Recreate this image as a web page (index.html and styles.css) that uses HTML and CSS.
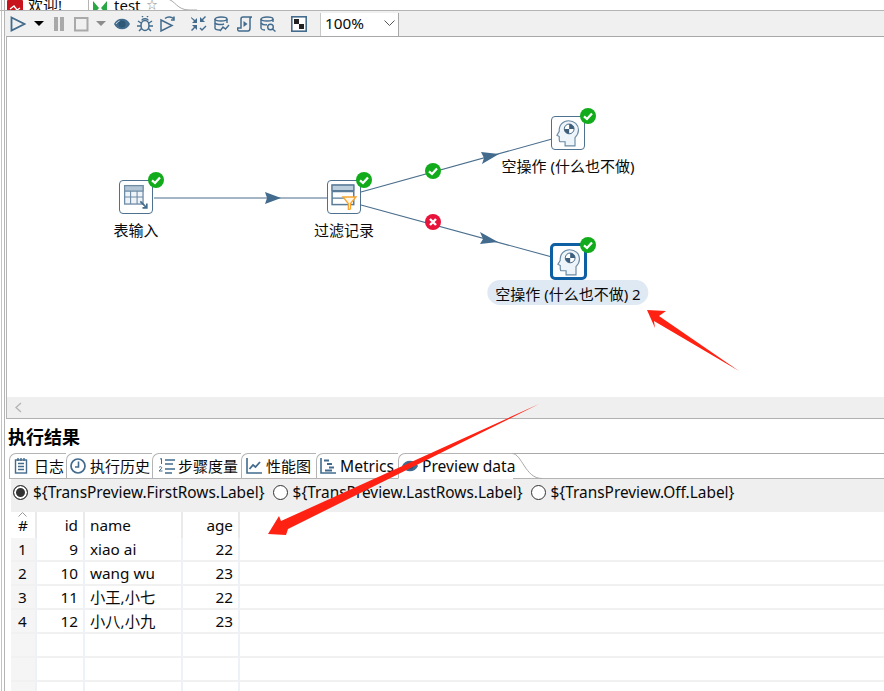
FILE: index.html
```html
<!DOCTYPE html>
<html lang="zh">
<head>
<meta charset="utf-8">
<title>test</title>
<link rel="stylesheet" href="styles.css">
</head>
<body>
<div class="page">
  <header class="filetabs">
    <div class="filetab filetab-welcome">
      <svg class="ft-icon" viewBox="0 0 16 16"><rect width="16" height="16" rx="1" fill="#c8141c"/><path d="M3 9l4-3 3 4 3-2" stroke="#fff" stroke-width="1.4" fill="none"/></svg>
      <span>欢迎!</span>
    </div>
    <div class="filetab filetab-test">
      <svg class="ft-icon" viewBox="0 0 16 16"><path d="M1 1l6 7-6 7zM15 1L9 8l6 7z" fill="#27a844"/></svg>
      <span>test</span>
      <span class="ft-star">☆</span>
      <svg class="ft-curve" viewBox="0 0 30 12"><path d="M0 0C8 1 10 11 22 11H30" fill="none" stroke="#a8a8a8"/></svg>
    </div>
  </header>

  <nav class="toolbar">
    <svg class="ti ti-run" viewBox="0 0 16 16"><path d="M1.500 1.500L14.500 8 1.500 14.500z" fill="none" stroke="#426b8d" stroke-width="1.800"/></svg>
    <svg class="ti-drop" viewBox="0 0 10 5"><path d="M0 0h10L5 5z" fill="#000"/></svg>
    <svg class="ti ti-pause" viewBox="0 0 16 16"><path d="M3 1h4v14H3zM9 1h4v14H9z" fill="#a9a9a9"/></svg>
    <svg class="ti ti-stop" viewBox="0 0 16 16"><rect x="2" y="2" width="12.500" height="12.500" fill="none" stroke="#a9a9a9" stroke-width="2"/></svg>
    <svg class="ti-drop ti-drop-grey" viewBox="0 0 10 5"><path d="M0 0h10L5 5z" fill="#8c8c8c"/></svg>
    <svg class="ti ti-eye" viewBox="0 0 16 16"><path d="M0 8c3-7 13-7 16 0-3 7-13 7-16 0z" fill="#426b8d"/><circle cx="8" cy="8" r="3.500" fill="#2e5878"/><path d="M2 8c1-1.500 2-2.500 3.500-3" stroke="#cfdbe5" fill="none"/></svg>
    <svg class="ti ti-bug" viewBox="0 0 16 16"><g fill="none" stroke="#426b8d" stroke-width="1.500"><ellipse cx="8" cy="9.500" rx="4" ry="5"/><path d="M5 4.500C5 2 11 2 11 4.500M4 7L1 5M12 7l3-2M4 10H0M12 10h4M4.500 12.500L2 15M11.500 12.500L14 15M6 1L5 0M10 1l1-1"/></g></svg>
    <svg class="ti ti-debug" viewBox="0 0 16 16"><g fill="none" stroke="#426b8d" stroke-width="1.500"><path d="M1 4l11 5.500L1 15z"/><path d="M5 2.500C8 0 12 1 14 3M14 .5V4h-3"/></g></svg>
    <svg class="ti ti-shrink" viewBox="0 0 16 16"><g fill="#426b8d"><path d="M0 1l4 3 2-2v5H1l2-2-3-3zM14 0l-3 3-2-2v5h5l-2-2 3-3zM0 14l3-3-2-2h5v5l-2-2-3 3z"/></g><path d="M9 12l2 2 4-4" fill="none" stroke="#426b8d" stroke-width="1.400"/></svg>
    <svg class="ti ti-dbchart" viewBox="0 0 16 16"><g fill="none" stroke="#426b8d" stroke-width="1.400"><path d="M1 3v9c0 1 2 2 5 2M13 3v4"/><ellipse cx="7" cy="3" rx="6" ry="2"/><path d="M1 7c1 1.500 6 2 9 1M6 15l3-4 2.500 2L15 9"/></g></svg>
    <svg class="ti ti-script" viewBox="0 0 16 16"><g fill="none" stroke="#426b8d" stroke-width="1.500"><path d="M4 12V3c0-1.500 1-2 2-2h9c-1 0-2 1-2 2v9c0 2-1 3-2 3H2c-1 0-1.500-1-1.500-3z"/></g><path d="M6.500 5l4 3-4 3z" fill="#426b8d"/></svg>
    <svg class="ti ti-dbsearch" viewBox="0 0 16 16"><g fill="none" stroke="#426b8d" stroke-width="1.400"><path d="M1 3v9c0 1 2 2 4 2M13 3v3"/><ellipse cx="7" cy="3" rx="6" ry="2"/><path d="M1 7c1 1.500 4 2 6 1.800"/><circle cx="10.500" cy="11" r="2.800"/><path d="M12.500 13l3 2.500"/></g></svg>
    <svg class="ti ti-grid" viewBox="0 0 16 16"><rect x=".8" y=".8" width="14.400" height="14.400" fill="#fff" stroke="#426b8d" stroke-width="1.600"/><rect x="3" y="3" width="5" height="5" fill="#222"/><rect x="8" y="8" width="5" height="5" fill="#222"/></svg>
    <div class="zoom-combo">
      <span>100%</span>
      <svg class="combo-chev" viewBox="0 0 11 6"><path d="M.5.500L5.500 5.500 10.500.500" fill="none" stroke="#555"/></svg>
    </div>
    <div class="toolbar-sep"></div>
  </nav>

  <main class="canvas-frame">
    <section class="canvas">
      <svg class="hops" viewBox="0 0 878 361">
        <g stroke="#4a6e8d" stroke-width="1.100" fill="none">
          <path d="M147 161H321"/>
          <path d="M354 155L545 102"/>
          <path d="M354 168L545 220"/>
        </g>
        <g fill="#426b8d">
          <path d="M274 161L258 155l2 6-2 6z"/>
          <path d="M492 117L474 115l3 6-2 6z"/>
          <path d="M491 205L473 195l3 7-3 5z"/>
        </g>
      </svg>

      <div class="node node-input">
        <svg class="node-icon" viewBox="0 0 24 24"><rect x="1.500" y="1.500" width="17" height="17" fill="#eef3f7" stroke="#6d8ba5" stroke-width="1.200"/><path d="M1.500 6.500h17M1.500 12h17M7 6.500v12M13 6.500v12" stroke="#6d8ba5"/><path d="M1.500 1.500h17v5h-17z" fill="#b4c6d5" stroke="#6d8ba5"/><path d="M16 16l6 6M22 18v4h-4" fill="none" stroke="#426b8d" stroke-width="1.500"/></svg>
        <svg class="badge" viewBox="0 0 16 16"><use href="#ok"/></svg>
      </div>
      <div class="node node-filter">
        <svg class="node-icon" viewBox="0 0 24 24"><rect x="1" y="1" width="20" height="18" fill="#fff" stroke="#5a7b98" stroke-width="1.400"/><path d="M1 1h20v5H1z" fill="#bccddb" stroke="#5a7b98"/><path d="M1 7h20M1 13h20" stroke="#5a7b98"/><path d="M11 12h12l-5 6v5l-2 1v-6z" fill="#fff6e5" stroke="#f6a531" stroke-width="1.200"/></svg>
        <svg class="badge" viewBox="0 0 16 16"><use href="#ok"/></svg>
      </div>
      <div class="node node-dummy">
        <svg class="node-icon node-icon-head" viewBox="0 0 24 24"><use href="#head"/></svg>
        <svg class="badge" viewBox="0 0 16 16"><use href="#ok"/></svg>
      </div>
      <div class="node node-dummy2">
        <svg class="node-icon node-icon-head" viewBox="0 0 24 24"><use href="#head"/></svg>
        <svg class="badge" viewBox="0 0 16 16"><use href="#ok"/></svg>
      </div>

      <span class="node-label label-input">表输入</span>
      <span class="node-label label-filter">过滤记录</span>
      <span class="node-label label-dummy">空操作 (什么也不做)</span>
      <span class="node-label label-dummy2">空操作 (什么也不做) 2</span>

      <svg class="badge hop-ok" viewBox="0 0 16 16"><use href="#ok"/></svg>
      <svg class="badge hop-err" viewBox="0 0 16 16"><circle cx="8" cy="8" r="8" fill="#e8123a"/><path d="M5 5l6 6M11 5l-6 6" stroke="#fff" stroke-width="2.400"/></svg>
    </section>
    <div class="hscroll"><svg class="hscroll-chev" viewBox="0 0 7 11"><path d="M6 1L1 5.500 6 10" fill="none" stroke="#b5b5b5" stroke-width="1.400"/></svg></div>
  </main>

  <section class="results">
    <h2 class="results-title">执行结果</h2>
    <div class="rtabs">
      <div class="rtab rtab-log">
        <svg class="rt-icon" viewBox="0 0 16 16"><g fill="none" stroke="#426b8d" stroke-width="1.400"><rect x="2.500" y="2" width="11" height="13"/><path d="M5 5.500h6M5 8.500h6M5 11.500h6M5 0v3M8 0v3M11 0v3"/></g></svg>
        <span>日志</span>
      </div>
      <div class="rtab rtab-history">
        <svg class="rt-icon" viewBox="0 0 16 16"><circle cx="8" cy="8" r="7" fill="none" stroke="#426b8d" stroke-width="1.700"/><path d="M8.500 3.500V9H5" fill="none" stroke="#426b8d" stroke-width="1.600"/></svg>
        <span>执行历史</span>
      </div>
      <div class="rtab rtab-steps">
        <svg class="rt-icon" viewBox="0 0 16 16"><path d="M6 2h10M6 6h8M6 11h10M6 15h7" stroke="#426b8d" stroke-width="1.300" fill="none"/><path d="M1 1l1.500-.5V6M0 9.500c2-2 3.500 0 2 1.500L0 13h3.500" stroke="#426b8d" fill="none"/></svg>
        <span>步骤度量</span>
      </div>
      <div class="rtab rtab-perf">
        <svg class="rt-icon" viewBox="0 0 16 16"><path d="M1 0v15h15" fill="none" stroke="#426b8d" stroke-width="1.600"/><path d="M3.500 11l3.500-4 2.500 2L14 4" fill="none" stroke="#426b8d" stroke-width="1.800"/></svg>
        <span>性能图</span>
      </div>
      <div class="rtab rtab-metrics">
        <svg class="rt-icon" viewBox="0 0 16 16"><path d="M1 0v15h15" fill="none" stroke="#426b8d" stroke-width="1.600"/><path d="M4 2.500h5M7 6h5M9 9.500h5M5 12.500h7" stroke="#426b8d" stroke-width="2"/></svg>
        <span>Metrics</span>
      </div>
      <div class="rtab rtab-preview">
        <svg class="rt-icon" viewBox="0 0 16 16"><path d="M0 8c3-7 13-7 16 0-3 7-13 7-16 0z" fill="#426b8d"/><circle cx="8" cy="8" r="3.500" fill="#2e5878"/></svg>
        <span>Preview data</span>
        <svg class="rt-curve" viewBox="0 0 30 26"><path d="M0 .5C10 .5 13 25.500 30 25.500" fill="#fff" stroke="#a8a8a8"/></svg>
      </div>
      <div class="rtab-fill"></div>
    </div>

    <div class="radios">
      <label class="radio"><span class="radio-dot radio-on"></span><span>${TransPreview.FirstRows.Label}</span></label>
      <label class="radio"><span class="radio-dot"></span><span>${TransPreview.LastRows.Label}</span></label>
      <label class="radio"><span class="radio-dot"></span><span>${TransPreview.Off.Label}</span></label>
    </div>

    <table class="grid">
      <thead>
        <tr><th class="c-num"><svg class="sort-caret" viewBox="0 0 9 5"><path d="M.5 4.500L4.500.5l4 4" fill="none" stroke="#999"/></svg>#</th><th class="c-id">id</th><th class="c-name">name</th><th class="c-age">age</th><th class="c-rest"></th></tr>
      </thead>
      <tbody>
        <tr><td class="c-num">1</td><td class="c-id">9</td><td class="c-name">xiao ai</td><td class="c-age">22</td><td class="c-rest"></td></tr>
        <tr><td class="c-num">2</td><td class="c-id">10</td><td class="c-name">wang wu</td><td class="c-age">23</td><td class="c-rest"></td></tr>
        <tr><td class="c-num">3</td><td class="c-id">11</td><td class="c-name">小王,小七</td><td class="c-age">22</td><td class="c-rest"></td></tr>
        <tr><td class="c-num">4</td><td class="c-id">12</td><td class="c-name">小八,小九</td><td class="c-age">23</td><td class="c-rest"></td></tr>
        <tr><td class="c-num"></td><td class="c-id"></td><td class="c-name"></td><td class="c-age"></td><td class="c-rest"></td></tr>
        <tr><td class="c-num"></td><td class="c-id"></td><td class="c-name"></td><td class="c-age"></td><td class="c-rest"></td></tr>
        <tr><td class="c-num"></td><td class="c-id"></td><td class="c-name"></td><td class="c-age"></td><td class="c-rest"></td></tr>
      </tbody>
    </table>
  </section>

  <svg class="annotations" viewBox="0 0 884 691">
    <path d="M647 310L666 311 659 316 739 371 654 321 655 328z" fill="#ff2213"/>
    <path d="M268 534L279 516 281 521 539 404 288 529 286 535z" fill="#ff2213"/>
  </svg>

  <svg class="defs" width="0" height="0">
    <defs>
      <g id="ok"><circle cx="8" cy="8" r="8" fill="#12ab1c"/><path d="M4 8.300L7 11l5-5.500" fill="none" stroke="#fff" stroke-width="2.300"/></g>
      <g id="head">
        <path d="M9.500 23v-3.500H5.500c-1 0-1-1-1-2V15L2.500 14l2-3.500C4 5 8 1.500 12.500 1.500c5 0 8.500 3.500 8.500 8 0 3-1 4.500-3 6.500v7z" fill="#eef5fa" stroke="#6b8aa4" stroke-width="1"/>
        <circle cx="13" cy="8.500" r="4.200" fill="#fff" stroke="#3d5f7c" stroke-width=".8"/>
        <path d="M13 8.500V4.300a4.200 4.200 0 0 1 4.200 4.200zM13 8.500H8.800A4.200 4.200 0 0 0 13 12.700z" fill="#3d5f7c"/>
      </g>
    </defs>
  </svg>
</div>
</body>
</html>
```
FILE: styles.css
```css
* { box-sizing: border-box; }
html, body { margin: 0; padding: 0; background: #fff; }
body {
  font-family: "Noto Sans", "Noto Sans CJK SC", sans-serif;
  font-size: 15.3px;
  color: #0a0a0a;
}
.page {
  position: relative;
  width: 884px;
  height: 691px;
  overflow: hidden;
  display: flex;
  flex-direction: column;
  background:
    linear-gradient(#c4c4c4, #c4c4c4) 1px 0 / 1px 100% no-repeat,
    linear-gradient(#b4b4b4, #b4b4b4) 4px 0 / 1px 100% no-repeat,
    #fff;
}

/* top file tabs (cut by the screenshot) */
.filetabs {
  height: 11px;
  flex: none;
  display: flex;
  overflow: hidden;
  border-bottom: 1px solid #b4b4b4;
}
.filetab {
  position: relative;
  height: 10px;
  display: flex;
  align-items: flex-end;
  line-height: 18px;
  font-size: 15px;
}
.filetab span { position: relative; top: 4px; }
.filetab-welcome { width: 89px; padding-left: 7px; gap: 5px; border-right: 1px solid #b4b4b4; }
.filetab-test { width: 84px; padding-left: 3px; gap: 6px; background: #fff; }
.ft-icon { width: 16px; height: 16px; flex: none; margin-bottom: -6px; }
.ft-star { font-size: 11px; color: #888; }
.ft-curve { position: absolute; left: 78px; top: -1px; width: 30px; height: 12px; }

/* toolbar */
.toolbar {
  height: 25px;
  flex: none;
  display: flex;
  align-items: center;
  background: #f0f0f0;
  margin-left: 5px;
  padding-left: 5px;
}
.ti { width: 16px; height: 16px; flex: none; }
.ti-drop { width: 10px; height: 5px; flex: none; margin-left: 8px; }
.ti-pause { margin-left: 7px; }
.ti-stop { margin-left: 6px; }
.ti-drop-grey { margin-left: 7px; }
.ti-eye { margin-left: 8px; }
.ti-bug { margin-left: 7px; }
.ti-debug { margin-left: 7px; }
.ti-shrink { margin-left: 15px; }
.ti-dbchart { margin-left: 7px; }
.ti-script { margin-left: 7px; }
.ti-dbsearch { margin-left: 7px; }
.ti-grid { margin-left: 15px; }
.zoom-combo {
  margin-left: 13px;
  width: 79px;
  height: 23px;
  background: #fff;
  border-left: 1px solid #c8c8c8;
  border-right: 1px solid #a8a8a8;
  display: flex;
  align-items: center;
  justify-content: space-between;
  padding: 0 3px 3px 4px;
  align-self: flex-end;
  font-size: 15.3px;
  line-height: 20px;
}
.combo-chev { width: 11px; height: 6px; }
.toolbar-sep { flex: 1; }

/* canvas */
.canvas-frame {
  height: 383px;
  flex: none;
  margin-left: 6px;
  display: flex;
  flex-direction: column;
  border-bottom: 1px solid #b0b0b0;
  position: relative;
}
.canvas {
  position: relative;
  height: 361px;
  flex: none;
  border-left: 1px solid #b4b4b4;
  border-top: 1px solid #a8a8a8;
  background: #fff;
}
.hops { position: absolute; left: 0; top: 0; width: 878px; height: 361px; }
.hscroll {
  flex: 1;
  background: #efefef;
  border-left: 1px solid #b4b4b4;
  display: flex;
  align-items: center;
  padding-left: 8px;
}
.hscroll-chev { width: 7px; height: 11px; }

.node {
  position: absolute;
  width: 34px;
  height: 34px;
  border: 1px solid #4f7190;
  border-radius: 4px;
  background: #fff;
  display: flex;
  align-items: center;
  justify-content: center;
}
.node-icon { width: 26px; height: 26px; }
.node-icon-head { width: 28px; height: 28px; }
.node-input { left: 112px; top: 143px; }
.node-filter { left: 320px; top: 143px; }
.node-dummy { left: 544px; top: 79px; }
.node-dummy2 {
  left: 543px;
  top: 206px;
  width: 37px;
  height: 37px;
  border: 3px solid #0f5fa3;
  border-radius: 5px;
}
.badge { position: absolute; width: 16px; height: 16px; }
.node .badge { right: -12px; top: -9px; }
.hop-ok { left: 418px; top: 126px; }
.hop-err { left: 418px; top: 177px; }

.node-label {
  position: absolute;
  white-space: nowrap;
  transform: translateX(-50%);
  font-size: 15px;
  line-height: 20px;
}
.label-input { left: 129px; top: 183px; }
.label-filter { left: 337px; top: 183px; }
.label-dummy { left: 561px; top: 119px; }
.label-dummy2 {
  left: 561px;
  top: 243px;
  height: 25px;
  line-height: 28px;
  padding: 0 8px;
  border-radius: 13px;
  background: #dfe9f3;
}

/* results */
.results { flex: 1; min-height: 0; display: flex; flex-direction: column; }
.results-title {
  margin: 0;
  flex: none;
  height: 34px;
  padding: 6px 0 0 8px;
  font-size: 18px;
  line-height: 24px;
  font-weight: 700;
  color: #000;
}
.rtabs {
  height: 26px;
  flex: none;
  margin-left: 9px;
  display: flex;
  align-items: stretch;
  background: #fff;
}
.rtab {
  position: relative;
  display: flex;
  align-items: center;
  gap: 4px;
  border-top: 1px solid #b4b4b4;
  border-left: 1px solid #b4b4b4;
  border-bottom: 1px solid #b4b4b4;
  border-top-left-radius: 7px;
  padding-left: 3px;
  background: #fff;
  line-height: 20px;
  white-space: nowrap;
}
.rtab span { font-size: 15px; }
.rt-icon { width: 16px; height: 16px; flex: none; }
.rtab-log { width: 57px; }
.rtab-log .rt-icon { margin-right: 1px; }
.rtab-history { width: 86px; padding-left: 3px; }
.rtab-steps { width: 89px; padding-left: 6px; gap: 3px; }
.rtab-perf { width: 75px; padding-left: 4px; }
.rtab-metrics { width: 82px; padding-left: 3px; }
.rtab-metrics span, .rtab-preview span { font-size: 15.6px; }
.rtab-preview { width: 115px; padding-left: 3px; border-bottom-color: transparent; }
.rt-curve { position: absolute; left: 113px; top: -1px; width: 30px; height: 26px; }
.rtab-fill { flex: 1; border-top: 1px solid #a8a8a8; border-bottom: 1px solid #b4b4b4; }

.radios {
  height: 33px;
  flex: none;
  margin-left: 11px;
  background: #efefef;
  display: flex;
  align-items: center;
  padding: 0 0 6px 2px;
  gap: 8px;
  font-size: 15.4px;
}
.radio { display: flex; align-items: center; gap: 5px; line-height: 20px; }
.radio-dot {
  width: 15px;
  height: 15px;
  border-radius: 50%;
  border: 1px solid #333;
  background: #fff;
  flex: none;
}
.radio-on { background: #333; box-shadow: inset 0 0 0 2px #fff; }

.grid {
  flex: none;
  border-collapse: separate;
  border-spacing: 0;
  table-layout: fixed;
  width: 873px;
  margin-left: 11px;
}
.grid th, .grid td {
  padding: 0;
  font-weight: 400;
  height: 24px;
  line-height: 20px;
  border-bottom: 2px solid #f1f1f1;
  border-right: 2px solid #edf2f8;
}
.grid th { height: 26px; border-bottom: 0; border-right-color: #eaeaea; }
.grid td.c-num { background: #f5f5f5; }
.grid .c-num { width: 26px; text-align: left; padding-left: 7px; position: relative; }
.grid .c-id { width: 48px; text-align: right; padding-right: 5px; }
.grid .c-name { width: 98px; text-align: left; padding-left: 5px; }
.grid .c-age { width: 57px; text-align: right; padding-right: 5px; }
.grid .c-rest { border-right: 0; }
.sort-caret { position: absolute; left: 7px; top: 0; width: 9px; height: 5px; }

.annotations { position: absolute; left: 0; top: 0; width: 884px; height: 691px; pointer-events: none; }
.defs { position: absolute; }
```
